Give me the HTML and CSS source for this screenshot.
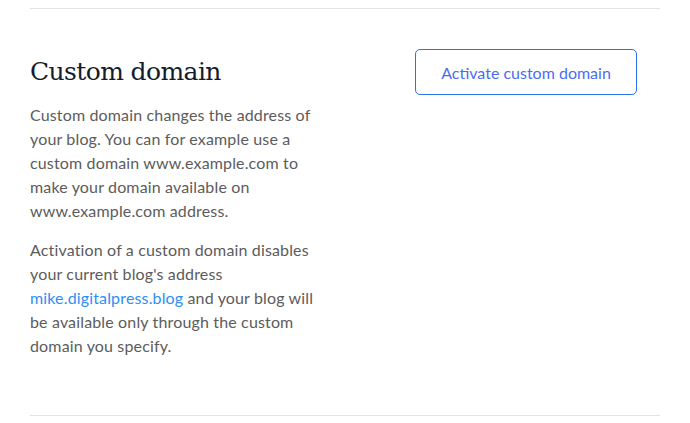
FILE: index.html
```html
<!DOCTYPE html>
<html lang="en">

<head>
    <meta charset="UTF-8">
    <meta name="viewport" content="width=device-width, initial-scale=1.0">
    <title>Custom domain</title>
    <link rel="stylesheet" href="styles.css">
</head>

<body>
    <div class="container">
        <section class="setting">
            <div class="setting-info">
                <h2>Custom domain</h2>
                <p>Custom domain changes the address of your blog. You can for example use a custom domain www.example.com to make your domain available on www.example.com address.</p>
                <p>Activation of a custom domain disables your current blog's address <a href="#">mike.digitalpress.blog</a> and your blog will be available only through the custom domain you specify.</p>
            </div>
            <div class="setting-action">
                <button type="button">Activate custom domain</button>
            </div>
        </section>
    </div>
</body>

</html>
```

FILE: styles.css
```css
body {
    margin: 0;
    padding: 0;
    font-family: Lato, "Noto Sans", sans-serif;
    background-color: #ffffff;
}

.container {
    padding: 8px 30px 0;
}

.setting {
    display: flex;
    justify-content: space-between;
    border-top: 1px solid #e3e3e3;
    border-bottom: 1px solid #e3e3e3;
    padding: 40px 23px 57px 0;
}

.setting-info {
    width: 292px;
}

h2 {
    font-family: "DejaVu Serif", serif;
    font-weight: normal;
    font-size: 25px;
    color: #141b2a;
    margin: 8px 0 17px;
    letter-spacing: -0.6px;
}

p {
    font-size: 16px;
    line-height: 24px;
    letter-spacing: 0.15px;
    color: #5c5c5c;
    margin: 0 0 15px;
}

p:last-child {
    margin-bottom: 0;
}

a {
    color: #2f8ef4;
    text-decoration: none;
}

button {
    font-family: Lato, "Noto Sans", sans-serif;
    font-size: 16px;
    color: #4d6cf2;
    background: #ffffff;
    border: 1px solid #2b72f0;
    border-radius: 5px;
    width: 222px;
    height: 46px;
    cursor: pointer;
}
```
